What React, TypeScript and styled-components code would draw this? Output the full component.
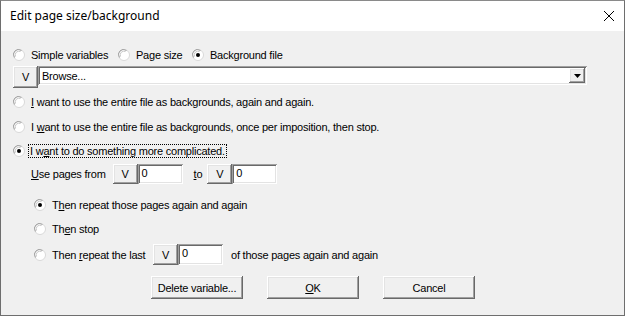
import React from "react";
import styled, { createGlobalStyle } from "styled-components";

const GlobalStyle = createGlobalStyle`
  html, body {
    margin: 0;
    padding: 0;
    background: #f0f0f0;
  }
`;

const uiFont = `"Liberation Sans", Arial, sans-serif`;

const Window = styled.div`
  width: 625px;
  height: 316px;
  box-sizing: border-box;
  border: 1px solid #6e6e6e;
  border-top-color: #8a8a8a;
  background: #f0f0f0;
  display: flex;
  flex-direction: column;
  overflow: hidden;
`;

const TitleBar = styled.div`
  height: 30px;
  background: #fff;
  display: flex;
  align-items: center;
  justify-content: space-between;
  padding: 0 9px 0 9px;
  flex-shrink: 0;
`;

const TitleText = styled.div`
  font-family: "Noto Sans", "Open Sans", sans-serif;
  font-size: 12px;
  color: #000;
  padding-bottom: 1px;
`;

const Body = styled.div`
  flex: 1;
  padding: 16px 0 0 12px;
  display: flex;
  flex-direction: column;
  font-family: ${uiFont};
  font-size: 11px;
  letter-spacing: -0.22px;
  color: #000;
`;

const Row = styled.div<{ $top?: number; $indent?: number; $h?: number }>`
  display: flex;
  align-items: center;
  margin-top: ${(p) => p.$top ?? 0}px;
  padding-left: ${(p) => p.$indent ?? 0}px;
  height: ${(p) => p.$h ?? 16}px;
`;

const TopRow = styled(Row)`
  align-items: flex-start;
`;

const RadioWrap = styled.label<{ $w?: number }>`
  display: flex;
  align-items: center;
  gap: 6px;
  width: ${(p) => (p.$w ? `${p.$w}px` : "auto")};
  flex-shrink: 0;
  white-space: nowrap;
`;

const Focus = styled.span`
  outline: 1px dotted #000;
  outline-offset: 0px;
  padding: 0 1px;
  margin-left: -2px;
`;

const Text = styled.span<{ $left?: number }>`
  margin-left: ${(p) => p.$left ?? 0}px;
  white-space: nowrap;
`;

const raised = `
  box-shadow: inset -1px -1px #696969, inset 1px 1px #ffffff,
    inset -2px -2px #a0a0a0, inset 2px 2px #e3e3e3;
`;

const sunken = `
  box-shadow: inset 1px 1px #a0a0a0, inset -1px -1px #ffffff,
    inset 2px 2px #696969, inset -2px -2px #e3e3e3;
`;

const VButton = styled.div<{ $h: number; $left?: number }>`
  width: 25px;
  height: ${(p) => p.$h}px;
  margin-left: ${(p) => p.$left ?? 0}px;
  box-sizing: border-box;
  background: #f0f0f0;
  ${raised}
  display: flex;
  align-items: center;
  justify-content: center;
  flex-shrink: 0;
`;

const Edit = styled.div<{ $w: number; $h: number }>`
  width: ${(p) => p.$w}px;
  height: ${(p) => p.$h}px;
  box-sizing: border-box;
  background: #fff;
  ${sunken}
  padding: 3px 0 0 4px;
  flex-shrink: 0;
`;

const Combo = styled.div`
  width: 549px;
  height: 19px;
  box-sizing: border-box;
  background: #fff;
  ${sunken}
  display: flex;
  align-items: center;
  justify-content: space-between;
  padding: 0 2px 0 4px;
`;

const DropButton = styled.div`
  width: 16px;
  height: 15px;
  box-sizing: border-box;
  background: #f0f0f0;
  ${raised}
  display: flex;
  align-items: center;
  justify-content: center;
`;

const ButtonRow = styled.div`
  display: flex;
  margin-top: 11px;
  padding-left: 138px;
  gap: 24px;
`;

const PushButton = styled.div`
  width: 92px;
  height: 23px;
  box-sizing: border-box;
  background: #f0f0f0;
  ${raised}
  display: flex;
  align-items: center;
  justify-content: center;
`;

const RadioIcon = ({ checked }: { checked?: boolean }) => (
  <svg width="12" height="12" viewBox="0 0 12 12">
    <circle cx="6" cy="6" r="5.5" fill="#fff" stroke="#d8d8d8" />
    <path d="M1.5 8.5 A5 5 0 0 1 8.5 1.5" fill="none" stroke="#a0a0a0" />
    <path d="M2.5 7.5 A3.8 3.8 0 0 1 7.5 2.5" fill="none" stroke="#c8c8c8" />
    {checked && <circle cx="6" cy="6" r="2" fill="#000" />}
  </svg>
);

interface RadioProps {
  checked?: boolean;
  width?: number;
  children: React.ReactNode;
}
function Radio({ checked, width, children }: RadioProps) {
  return (
    <RadioWrap $w={width}>
      <RadioIcon checked={checked} />
      <span>{children}</span>
    </RadioWrap>
  );
}

const CloseIcon = () => (
  <svg width="12" height="12" viewBox="0 0 12 12">
    <path d="M1 1 L11 11 M11 1 L1 11" stroke="#000" strokeWidth="1" />
  </svg>
);

const DropArrow = () => (
  <svg width="7" height="4" viewBox="0 0 7 4">
    <path d="M0 0 H7 L3.5 4 Z" fill="#000" />
  </svg>
);

export default function App() {
  return (
    <>
      <GlobalStyle />
      <Window>
        <TitleBar>
          <TitleText>Edit page size/background</TitleText>
          <CloseIcon />
        </TitleBar>
        <Body>
          <Row>
            <Radio width={105}>Simple variables</Radio>
            <Radio width={74}>Page size</Radio>
            <Radio checked>Background file</Radio>
          </Row>
          <TopRow $top={3} $h={22}>
            <VButton $h={22}>V</VButton>
            <Combo>
              <span>Browse...</span>
              <DropButton>
                <DropArrow />
              </DropButton>
            </Combo>
          </TopRow>
          <Row $top={6}>
            <Radio>
              <u>I</u> want to use the entire file as backgrounds, again and again.
            </Radio>
          </Row>
          <Row $top={9}>
            <Radio>
              I <u>w</u>ant to use the entire file as backgrounds, once per imposition, then stop.
            </Radio>
          </Row>
          <Row $top={8}>
            <Radio checked>
              <Focus>
                I w<u>a</u>nt to do something more complicated.
              </Focus>
            </Radio>
          </Row>
          <Row $top={5} $h={20} $indent={18}>
            <Text>
              <u>U</u>se pages from
            </Text>
            <VButton $h={20} $left={7}>V</VButton>
            <Edit $w={45} $h={20}>0</Edit>
            <Text $left={11}>
              <u>t</u>o
            </Text>
            <VButton $h={20} $left={5}>V</VButton>
            <Edit $w={45} $h={20}>0</Edit>
          </Row>
          <Row $top={13} $indent={21}>
            <Radio checked>
              T<u>h</u>en repeat those pages again and again
            </Radio>
          </Row>
          <Row $top={8} $indent={21}>
            <Radio>
              Th<u>e</u>n stop
            </Radio>
          </Row>
          <Row $top={7} $h={21} $indent={21}>
            <Radio width={119}>
              Then <u>r</u>epeat the last
            </Radio>
            <VButton $h={21}>V</VButton>
            <Edit $w={45} $h={21}>0</Edit>
            <Text $left={8}>of those pages again and again</Text>
          </Row>
          <ButtonRow>
            <PushButton>Delete variable...</PushButton>
            <PushButton>
              <span>
                <u>O</u>K
              </span>
            </PushButton>
            <PushButton>Cancel</PushButton>
          </ButtonRow>
        </Body>
      </Window>
    </>
  );
}
